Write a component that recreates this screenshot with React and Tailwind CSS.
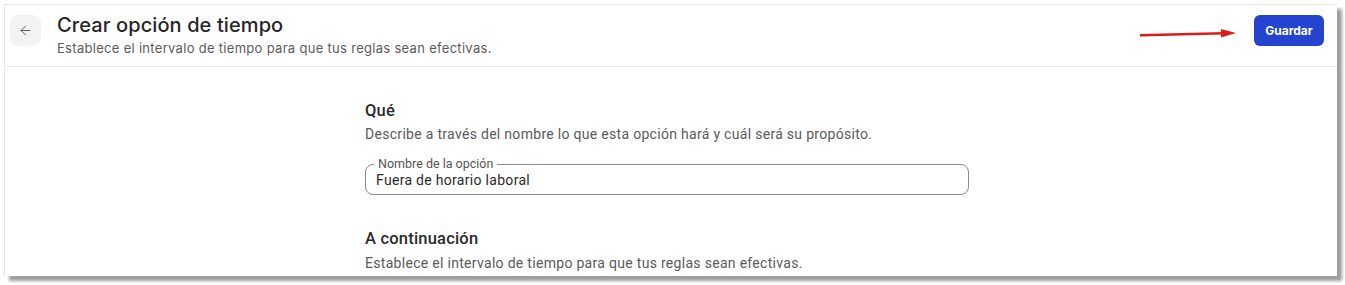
import React from 'react';
import { ArrowLeft } from 'lucide-react';

const App = () => {
  return (
    <div className="w-[1345px] h-[285px] bg-white overflow-hidden">
      {/* Screenshot frame with drop shadow */}
      <div className="ml-[4px] mt-[4px] w-[1333px] h-[272px] bg-white border-l border-t border-[#e6e6e6] shadow-[5px_5px_3px_rgba(0,0,0,0.38)] overflow-hidden">
        {/* Header */}
        <div className="h-[62px] flex items-start justify-between border-b border-[#e8e8e8] font-['Inter',sans-serif]">
          <div className="flex items-start pl-[5px] pt-[10px]">
            <button className="w-[31px] h-[31px] rounded-lg bg-[#f2f3f5] flex items-center justify-center text-[#555]">
              <ArrowLeft className="w-[15px] h-[15px]" strokeWidth={1.5} />
            </button>
            <div className="ml-[16px] -mt-[3px]">
              <h1 className="text-[20px] leading-[26px] font-medium text-[#262626] tracking-[0.1px]">Crear opción de tiempo</h1>
              <p className="text-[13px] leading-[18px] text-[#5c5c5c] mt-[1px] tracking-[0.3px]">Establece el intervalo de tiempo para que tus reglas sean efectivas.</p>
            </div>
          </div>
          <div className="flex items-center gap-[17px] pr-[13px] pt-[10px]">
            <svg width="97" height="12" viewBox="0 0 97 12" className="mt-[6px]">
              <path d="M1 7.2 L84 5.2" stroke="#d91c1c" strokeWidth="2.6" strokeLinecap="round" />
              <path d="M81 1 L96 5 L81 9.5 Z" fill="#d91c1c" />
            </svg>
            <button className="w-[70px] h-[31px] rounded-md bg-[#2443cf] text-white text-[12px] font-bold">Guardar</button>
          </div>
        </div>

        {/* Content */}
        <div className="ml-[360px] w-[604px] pt-[32px] font-['Roboto',sans-serif]">
          <h2 className="text-[16.5px] leading-[24px] text-[#2a2a2a] font-medium tracking-[0.2px]">Qué</h2>
          <p className="text-[14px] leading-[20px] text-[#5a5a5a] mt-[1px] tracking-[0.3px]">Describe a través del nombre lo que esta opción hará y cuál será su propósito.</p>

          <div className="relative mt-[20px] h-[31px] rounded-lg border border-[#8a8a8a] flex items-center pl-[10px]">
            <span className="absolute -top-[8px] left-[8px] bg-white px-[4px] text-[12.5px] leading-[14px] text-[#555]">Nombre de la opción</span>
            <span className="text-[14px] text-[#2a2a2a] mt-[1px] tracking-[0.3px]">Fuera de horario laboral</span>
          </div>

          <h2 className="mt-[32px] text-[16.5px] leading-[24px] text-[#2a2a2a] font-medium tracking-[0.2px]">A continuación</h2>
          <p className="text-[14px] leading-[20px] text-[#5a5a5a] mt-[2px] tracking-[0.3px]">Establece el intervalo de tiempo para que tus reglas sean efectivas.</p>
        </div>
      </div>
    </div>
  );
};

export default App;
